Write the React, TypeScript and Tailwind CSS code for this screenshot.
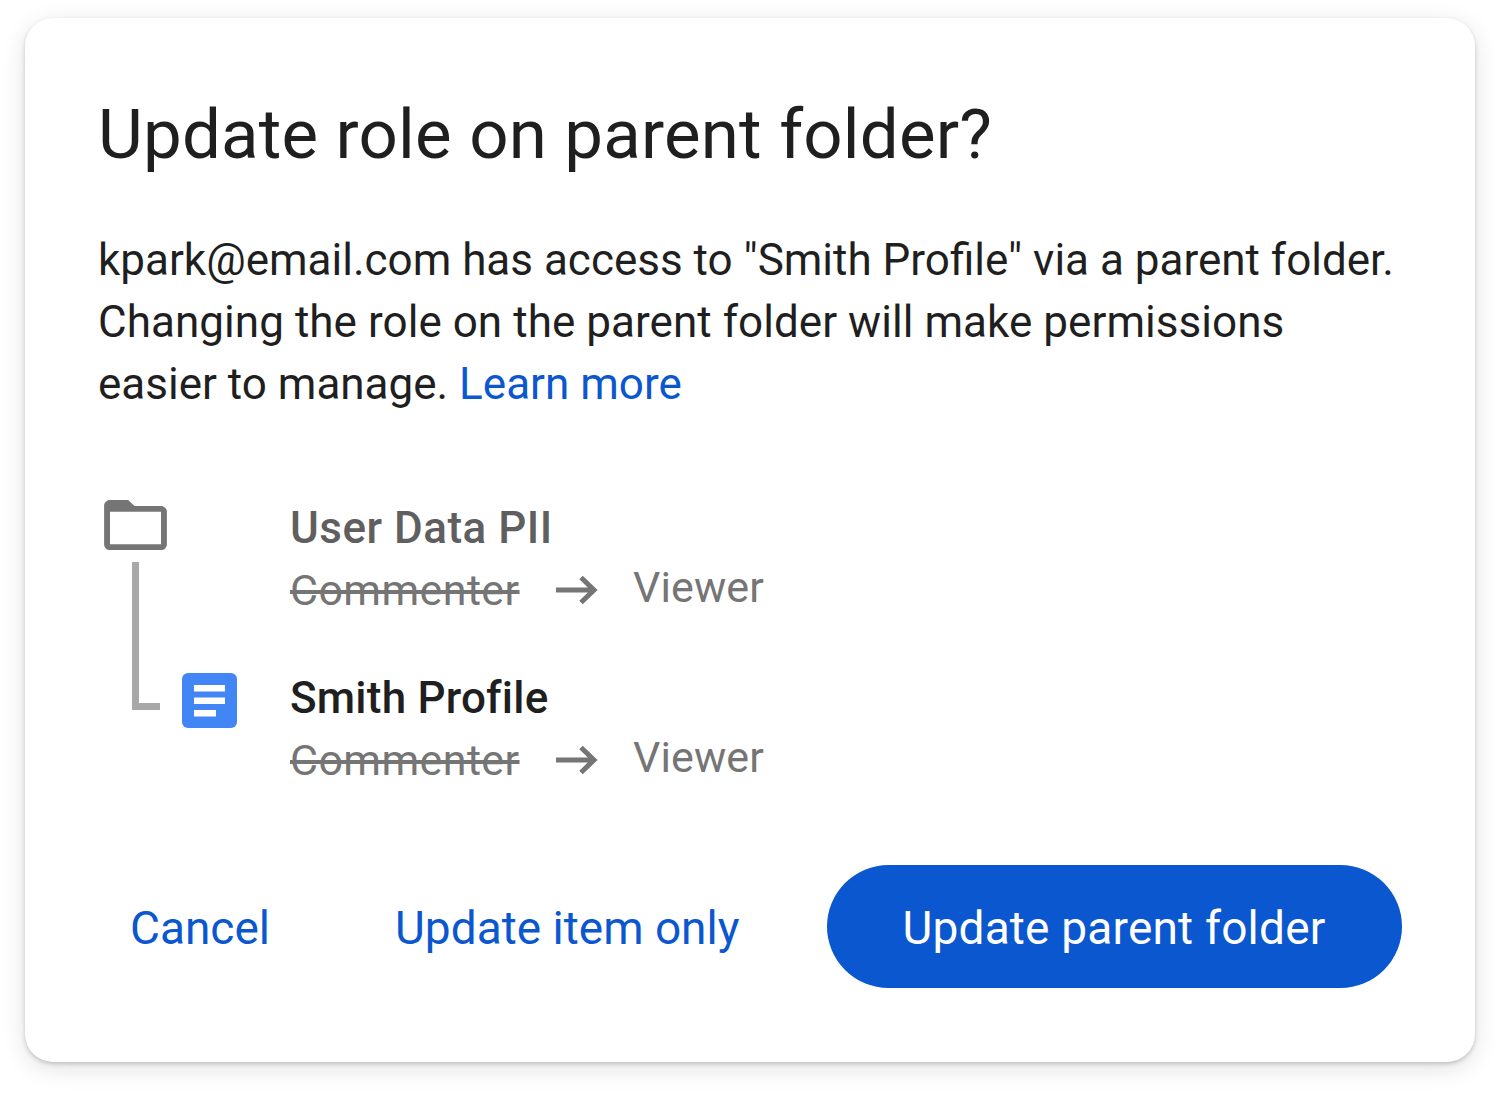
import React from "react";

function Folder() {
  return (
    <svg width="63" height="51" viewBox="0 0 64 52" className="block">
      <path d="M6 0H24.500L31 6H58C61.300 6 64 8.700 64 12V45C64 48.300 61.300 51 58 51H6C2.700 51 0 48.300 0 45V6C0 2.700 2.700 0 6 0ZM6 12V45H58V12Z" fill="#757575" fillRule="evenodd" />
    </svg>
  );
}

function Doc() {
  return (
    <svg width="55" height="55" viewBox="0 0 55 55" className="block">
      <rect width="55" height="55" rx="6" fill="#4285f4" />
      <rect x="12" y="12" width="31" height="6.500" fill="#fff" />
      <rect x="12" y="24.500" width="31" height="6.500" fill="#fff" />
      <rect x="12" y="37" width="22" height="6.500" fill="#fff" />
    </svg>
  );
}

function Arrow() {
  return (
    <svg width="42" height="32" viewBox="0 0 42 32" className="block">
      <path d="M0 16H38M25 3.500L38 16L25 28.500" fill="none" stroke="#757575" strokeWidth="5" />
    </svg>
  );
}

function Change() {
  return (
    <div className="flex items-center h-[62px] -mt-[2px] text-[43px] text-[#757575]">
      <span className="line-through mt-[4px] w-[230px] tracking-[0.4px]">Commenter</span>
      <span className="ml-[36px] mt-[4px]"><Arrow /></span>
      <span className="ml-[35px] -mt-[2px] tracking-[0.1px]">Viewer</span>
    </div>
  );
}

export default function App() {
  return (
    <div className="bg-white w-[1500px] h-[1093px] pt-[18px] px-[25px] font-['Roboto',sans-serif]">
      <div className="h-[1044px] w-[1450px] bg-white rounded-[28px] shadow-[0_2px_4px_rgba(0,0,0,0.18),0_6px_24px_rgba(0,0,0,0.12)] pl-[75px] pr-[75px] pt-[72px]">
        <h1 className="text-[69px] leading-[86px] mt-[2px] -ml-[2px] text-[#1f1f1f] font-normal tracking-[0.2px] whitespace-nowrap">
          Update role on parent folder?
        </h1>
        <p className="mt-[51px] -ml-[2px] text-[44px] leading-[62px] text-[#1f1f1f] whitespace-nowrap">
          kpark@email.com has access to "Smith Profile" via a parent folder.
          <br />
          <span className="tracking-[0.05px]">Changing the role on the parent folder will make permissions</span>
          <br />
          easier to manage. <span className="text-[#0b57d0]">Learn more</span>
        </p>
        <div className="flex mt-[81px]">
          <div className="w-[190px] shrink-0 pt-[4px]">
            <div className="ml-[4px] h-[52px]"><Folder /></div>
            <div className="flex mt-[10px] ml-[32px]">
              <div className="w-[28px] h-[148px] border-l-[7px] border-b-[7px] border-[#a8a8a8]" />
              <div className="ml-[22px] mt-[111px]"><Doc /></div>
            </div>
          </div>
          <div className="flex flex-col">
            <div className="text-[44px] leading-[62px] text-[#5f5f5f] mt-[1px] font-medium tracking-[0.5px]">User Data PII</div>
            <Change />
            <div className="text-[44px] leading-[62px] text-[#1f1f1f] mt-[48px] font-medium tracking-[0.2px]">Smith Profile</div>
            <Change />
          </div>
        </div>
        <div className="flex items-center mt-[76px] text-[46px] leading-[56px] text-[#0b57d0] whitespace-nowrap">
          <span className="ml-[30px] shrink-0 pt-[2px]">Cancel</span>
          <span className="ml-[125px] shrink-0 pt-[2px]">Update item only</span>
          <button className="ml-[88px] w-[575px] h-[123px] shrink-0 pt-[2px] pr-[2px] rounded-full bg-[#0b57d0] text-white text-center tracking-[0.2px]">
            Update parent folder
          </button>
        </div>
      </div>
    </div>
  );
}
